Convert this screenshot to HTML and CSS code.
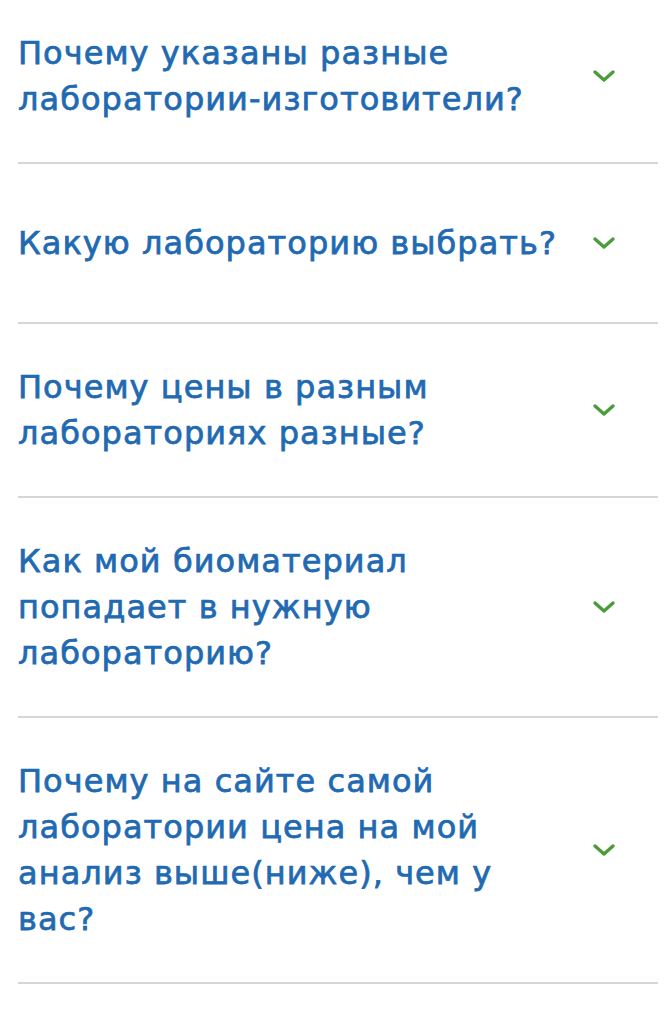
FILE: index.html
```html
<!DOCTYPE html>
<html lang="ru">
<head>
<meta charset="utf-8">
<link rel="stylesheet" href="styles.css">
</head>
<body>
<ul class="faq">
  <li class="faq-item">
    <span class="faq-q">Почему указаны разные лаборатории-изготовители?</span>
    <svg class="chev" viewBox="0 0 24 14"><path d="M3 3 L12 11 L21 3"/></svg>
  </li>
  <li class="faq-item">
    <span class="faq-q">Какую лабораторию выбрать?</span>
    <svg class="chev" viewBox="0 0 24 14"><path d="M3 3 L12 11 L21 3"/></svg>
  </li>
  <li class="faq-item">
    <span class="faq-q">Почему цены в разным лабораториях разные?</span>
    <svg class="chev" viewBox="0 0 24 14"><path d="M3 3 L12 11 L21 3"/></svg>
  </li>
  <li class="faq-item">
    <span class="faq-q">Как мой биоматериал попадает в нужную лабораторию?</span>
    <svg class="chev" viewBox="0 0 24 14"><path d="M3 3 L12 11 L21 3"/></svg>
  </li>
  <li class="faq-item">
    <span class="faq-q">Почему на сайте самой лаборатории цена на мой анализ выше(ниже), чем у вас?</span>
    <svg class="chev" viewBox="0 0 24 14"><path d="M3 3 L12 11 L21 3"/></svg>
  </li>
</ul>
</body>
</html>
```
FILE: styles.css
```css
html, body {
  margin: 0;
  padding: 0;
  background: #ffffff;
}
body {
  font-family: "DejaVu Sans", "Liberation Sans", sans-serif;
  overflow: hidden;
}
.faq {
  list-style: none;
  margin: -10px 10px 0 18px;
  padding: 0;
}
.faq-item {
  display: flex;
  align-items: center;
  gap: 28px;
  min-height: 160px;
  padding: 40px 42px 40px 0;
  box-sizing: border-box;
  border-bottom: 2px solid #d6d6d6;
}
.faq-q {
  flex: 1;
  font-size: 32px;
  line-height: 46px;
  letter-spacing: 1.05px;
  font-weight: 400;
  -webkit-text-stroke: 0.75px currentColor;
  color: #1f6ab2;
}
.chev {
  width: 24px;
  height: 14px;
  flex: none;
  fill: none;
  stroke: #4b9c3a;
  stroke-width: 3.4;
  stroke-linecap: round;
  stroke-linejoin: round;
}
```
